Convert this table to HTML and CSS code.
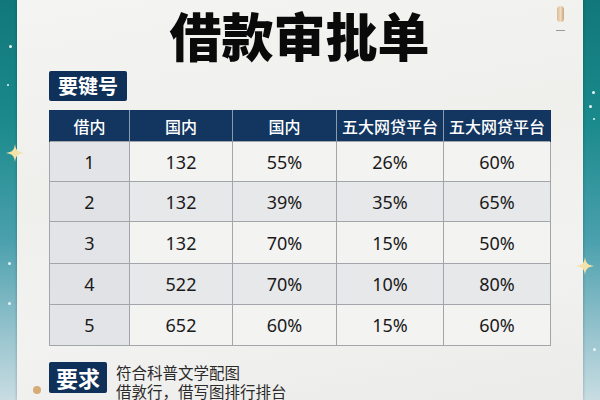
FILE: index.html
```html
<!DOCTYPE html>
<html lang="zh">
<head>
<meta charset="utf-8">
<link rel="stylesheet" href="styles.css">
</head>
<body>
<div class="bg-deco">
  <span class="dot d1"></span><span class="dot d2"></span><span class="dot d3"></span><span class="dot d4"></span>
  <span class="dot d5"></span><span class="dot d6"></span><span class="dot d7"></span><span class="dot d8"></span>
  <svg class="star s-left" width="18" height="18" viewBox="0 0 20 20"><path d="M10 0 C11 7 13 9 20 10 C13 11 11 13 10 20 C9 13 7 11 0 10 C7 9 9 7 10 0Z" fill="#f3e3a8"/></svg>
  <svg class="star s-right" width="18" height="18" viewBox="0 0 20 20"><path d="M10 0 C11 7 13 9 20 10 C13 11 11 13 10 20 C9 13 7 11 0 10 C7 9 9 7 10 0Z" fill="#f3e3a8"/></svg>
</div>
<main class="paper">
  <span class="pin"></span><span class="pin-dash"></span>
  <h1 class="title">借款审批单</h1>
  <div class="label">要键号</div>
  <table class="grid">
    <colgroup><col class="c1"><col class="c2"><col class="c3"><col class="c4"><col class="c5"></colgroup>
    <thead>
      <tr><th>借内</th><th>国内</th><th>国内</th><th>五大网贷平台</th><th>五大网贷平台</th></tr>
    </thead>
    <tbody>
      <tr class="r1"><td>1</td><td>132</td><td>55%</td><td>26%</td><td>60%</td></tr>
      <tr class="r2 alt"><td>2</td><td>132</td><td>39%</td><td>35%</td><td>65%</td></tr>
      <tr class="r3"><td>3</td><td>132</td><td>70%</td><td>15%</td><td>50%</td></tr>
      <tr class="r4 alt"><td>4</td><td>522</td><td>70%</td><td>10%</td><td>80%</td></tr>
      <tr class="r5"><td>5</td><td>652</td><td>60%</td><td>15%</td><td>60%</td></tr>
    </tbody>
  </table>
  <div class="req">
    <span class="orange-dot"></span>
    <div class="req-label">要求</div>
    <div class="req-text">
      <p>符合科普文学配图</p>
      <p>借敦行，借写图排行排台</p>
    </div>
  </div>
</main>
</body>
</html>
```

FILE: styles.css
```css
html, body {
  margin: 0;
  padding: 0;
}
body {
  width: 600px;
  height: 400px;
  overflow: hidden;
  position: relative;
  display: flex;
  font-family: "Noto Sans", "Noto Sans CJK SC", sans-serif;
  background: linear-gradient(180deg, #11777a 0%, #1a8a8c 30%, #4aa0ad 60%, #9cc6d0 85%, #c8dde2 100%);
}
.bg-deco {
  position: absolute;
  inset: 0;
  pointer-events: none;
  z-index: 2;
}
.dot {
  position: absolute;
  width: 3px;
  height: 3px;
  border-radius: 50%;
  background: #e8f6f6;
}
.d1 { left: 9px; top: 45px; }
.d2 { left: 7px; top: 84px; width: 2px; height: 2px; }
.d3 { left: 8px; top: 262px; }
.d4 { left: 8px; top: 302px; }
.d5 { left: 592px; top: 91px; }
.d6 { left: 589px; top: 105px; }
.d7 { left: 593px; top: 118px; width: 2px; height: 2px; }
.d8 { left: 593px; top: 348px; }
.star { position: absolute; }
.s-left { left: 6px; top: 144px; }
.s-right { left: 576px; top: 257px; }

.paper {
  position: relative;
  z-index: 1;
  margin: 0 17px 0 17px;
  flex: 1;
  height: 400px;
  background: linear-gradient(170deg, #f4f4f2 0%, #efefec 40%, #f2f2f0 70%, #ebebea 100%);
  box-shadow: 0 0 3px rgba(0,0,0,0.25);
  padding: 0 0 0 32px;
  box-sizing: border-box;
  display: flex;
  flex-direction: column;
  align-items: flex-start;
}
.pin {
  position: absolute;
  left: 540px;
  top: 6px;
  width: 7px;
  height: 16px;
  border-radius: 4px;
  background: linear-gradient(90deg, #d9b894, #f0dcc0, #c9a47c);
}
.pin-dash {
  position: absolute;
  left: 539px;
  top: 30px;
  width: 9px;
  height: 1px;
  background: #9a9a9a;
}
.title {
  margin: 2px 0 0 0;
  width: 501px;
  text-align: center;
  font-family: "Noto Sans CJK SC", sans-serif;
  font-weight: 900;
  font-size: 52px;
  line-height: 66px;
  color: #0a0a0a;
  letter-spacing: 0;
}
.label {
  margin-top: 3px;
  background: #0f3058;
  color: #fff;
  font-family: "Noto Sans CJK SC", sans-serif;
  font-weight: 700;
  font-size: 20px;
  line-height: 30px;
  height: 30px;
  padding: 0 9px;
  border-radius: 2px;
}
.grid {
  margin-top: 9px;
  width: 502px;
  border-collapse: collapse;
  table-layout: fixed;
}
.c1 { width: 80px; }
.c2 { width: 103px; }
.c3 { width: 104px; }
.c4 { width: 107px; }
.c5 { width: 107px; }
.grid th {
  background: #123660;
  color: #fff;
  font-family: "Noto Sans CJK SC", sans-serif;
  font-weight: 500;
  font-size: 16px;
  height: 31px;
  padding: 0;
  border: 1px solid #8a9ab0;
  border-top: none;
  border-bottom: none;
}
.grid th:first-child { border-left: 1px solid #123660; }
.grid th:last-child { border-right: 1px solid #123660; }
.grid td {
  text-align: center;
  font-size: 18px;
  color: #1a1a1a;
  height: 39px;
  padding: 0;
  border: 1px solid #a2a5aa;
  background: #f3f3f2;
}
.grid tr.r4 td, .grid tr.r5 td { height: 40px; }
.grid tr.r3 td { height: 41px; }
.grid td:first-child { background: #e3e4e7; }
.grid tr.alt td { background: #e7e8ea; }
.grid tr.alt td:first-child { background: #e1e2e5; }

.req {
  position: relative;
  margin-top: 16px;
  display: flex;
  align-items: flex-start;
  gap: 9px;
}
.orange-dot {
  position: absolute;
  left: -16px;
  top: 24px;
  width: 8px;
  height: 8px;
  border-radius: 50%;
  background: #d6ab78;
}
.req-label {
  background: #0f3058;
  color: #fff;
  font-family: "Noto Sans CJK SC", sans-serif;
  font-weight: 700;
  font-size: 22px;
  line-height: 31px;
  height: 31px;
  padding: 0 7px;
  border-radius: 2px;
}
.req-text {
  font-family: "Noto Sans CJK SC", sans-serif;
  font-size: 15.5px;
  line-height: 18.5px;
  color: #2a2a2a;
  margin-top: 1px;
}
.req-text p { margin: 0; }
```
